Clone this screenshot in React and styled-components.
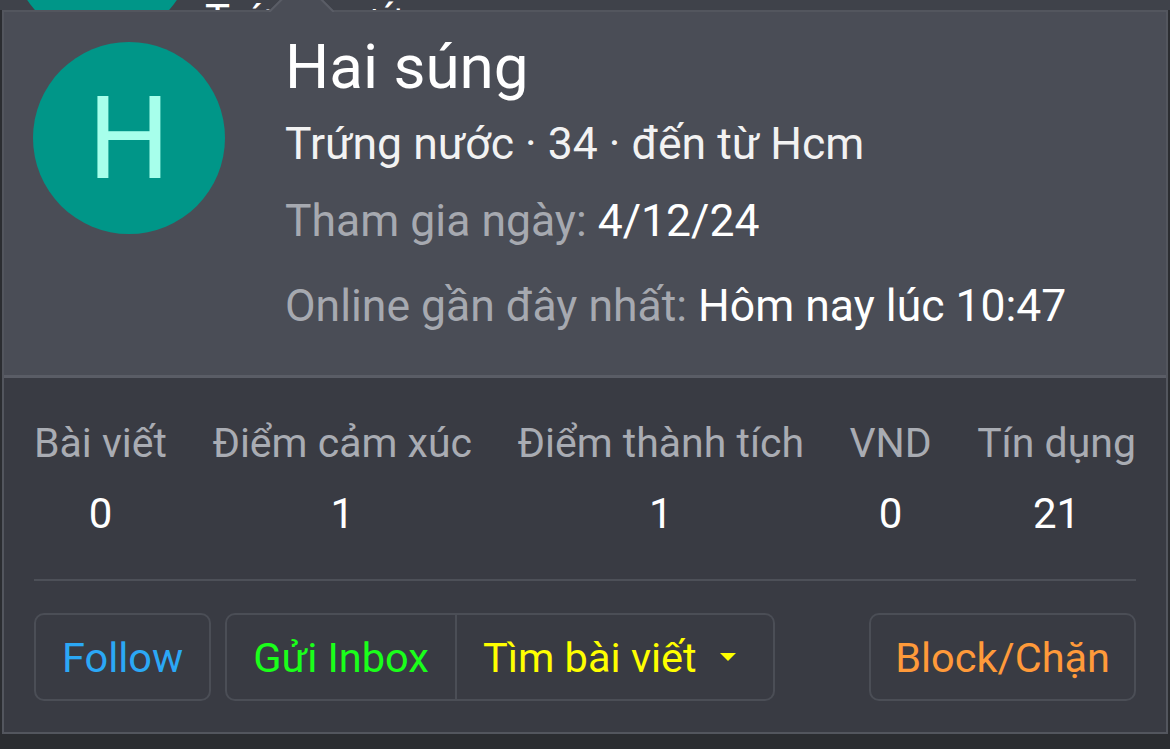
import React from 'react';
import styled, { createGlobalStyle } from 'styled-components';

const GlobalStyle = createGlobalStyle`
  body {
    margin: 0;
    background: #2b2d31;
    font-family: Roboto, "Noto Sans", sans-serif;
  }
`;

const stats = [
  { label: 'Bài viết', value: '0' },
  { label: 'Điểm cảm xúc', value: '1' },
  { label: 'Điểm thành tích', value: '1' },
  { label: 'VND', value: '0' },
  { label: 'Tín dụng', value: '21' },
];

const App = () => {
  return (
    <Page>
      <GlobalStyle />
      <Backdrop>
        <BackAvatar>H</BackAvatar>
        <BackText>Trứng nước</BackText>
      </Backdrop>
      <Tooltip>
        <Arrow />
        <Head>
          <Avatar>H</Avatar>
          <Info>
            <Name>Hai súng</Name>
            <Blurb>Trứng nước · 34 · đến từ Hcm</Blurb>
            <Meta $gap={23}>
              Tham gia ngày: <Strong>4/12/24</Strong>
            </Meta>
            <Meta $gap={31}>
              Online gần đây nhất: <Strong>Hôm nay lúc 10:47</Strong>
            </Meta>
          </Info>
        </Head>
        <Body>
          <Stats>
            {stats.map(s => (
              <Stat key={s.label}>
                <StatLabel>{s.label}</StatLabel>
                <StatValue>{s.value}</StatValue>
              </Stat>
            ))}
          </Stats>
          <Sep />
          <Actions>
            <Button $color="#2ba8f6">Follow</Button>
            <Group>
              <Button $color="#1aff1a" $part="first">Gửi Inbox</Button>
              <Button $color="#ffff00" $part="last">
                Tìm bài viết
                <Caret />
              </Button>
            </Group>
            <Button $color="#ff9a3a" $pad={24} $push>Block/Chặn</Button>
          </Actions>
        </Body>
      </Tooltip>
    </Page>
  );
};

const Page = styled.div`
  width: 1170px;
  height: 749px;
  overflow: hidden;
  display: flex;
  flex-direction: column;
`;

const Backdrop = styled.div`
  height: 10px;
  flex-shrink: 0;
  background: #3f424a;
  overflow: hidden;
  display: flex;
  align-items: flex-start;
`;

const BackAvatar = styled.div`
  flex-shrink: 0;
  width: 180px;
  height: 180px;
  margin: -140px 0 0 12px;
  border-radius: 50%;
  background: #009688;
  color: #a7ffeb;
  font-size: 84px;
  display: flex;
  align-items: center;
  justify-content: center;
`;

const BackText = styled.div`
  margin: -1px 0 0 13px;
  font-size: 42px;
  line-height: 42px;
  color: #ffffff;
  white-space: nowrap;
`;

const Tooltip = styled.div`
  position: relative;
  margin: 0 2px;
  border: 2px solid #53565e;
  display: flex;
  flex-direction: column;
`;

const Arrow = styled.div`
  position: absolute;
  top: -24px;
  left: 274px;
  width: 45px;
  height: 45px;
  background: #4a4d56;
  border-top: 2px solid #5a5d66;
  border-left: 2px solid #5a5d66;
  transform: rotate(45deg);
`;

const Head = styled.div`
  position: relative;
  background: #4a4d56;
  border-bottom: 3px solid #5a5d66;
  padding: 17px 29px 42px;
  display: flex;
  align-items: flex-start;
  gap: 60px;
`;

const Avatar = styled.div`
  flex-shrink: 0;
  width: 192px;
  height: 192px;
  margin-top: 13px;
  border-radius: 50%;
  background: #009688;
  color: #a7ffeb;
  font-size: 115px;
  line-height: 1;
  display: flex;
  align-items: center;
  justify-content: center;
`;

const Info = styled.div`
  display: flex;
  flex-direction: column;
`;

const Name = styled.div`
  font-size: 62px;
  line-height: 76px;
  color: #ffffff;
`;

const Blurb = styled.div`
  margin-top: 12px;
  font-size: 44.5px;
  line-height: 54px;
  color: #f2f2f2;
`;

const Meta = styled.div`
  margin-top: ${p => p.$gap}px;
  font-size: 44.5px;
  line-height: 54px;
  color: #a6a9b0;
  white-space: nowrap;
`;

const Strong = styled.span`
  color: #ffffff;
`;

const Body = styled.div`
  background: #393b43;
  padding: 40px 30px 31px;
  display: flex;
  flex-direction: column;
`;

const Stats = styled.div`
  display: flex;
  justify-content: space-between;
`;

const Stat = styled.div`
  display: flex;
  flex-direction: column;
  align-items: center;
  gap: 21px;
`;

const StatLabel = styled.div`
  font-size: 41px;
  line-height: 50px;
  color: #a9acb3;
  white-space: nowrap;
`;

const StatValue = styled.div`
  font-size: 42px;
  line-height: 50px;
  color: #ffffff;
`;

const Sep = styled.div`
  height: 2px;
  margin-top: 40px;
  background: #4d5058;
`;

const Actions = styled.div`
  margin-top: 32px;
  display: flex;
  align-items: center;
  gap: 14px;
`;

const Group = styled.div`
  display: flex;
`;

const Button = styled.div`
  box-sizing: border-box;
  height: 88px;
  padding: 0 ${p => p.$pad ?? 26}px;
  border: 2px solid #4b4e56;
  border-radius: 10px;
  display: flex;
  align-items: center;
  font-size: 41.5px;
  color: ${p => p.$color};
  white-space: nowrap;
  ${p => (p.$push ? 'margin-left: auto;' : '')}
  ${p =>
    p.$part === 'first'
      ? 'border-top-right-radius: 0; border-bottom-right-radius: 0;'
      : ''}
  ${p =>
    p.$part === 'last'
      ? 'border-left: none; border-top-left-radius: 0; border-bottom-left-radius: 0; padding-right: 37px;'
      : ''}
`;

const Caret = styled.span`
  margin-left: 23px;
  width: 0;
  height: 0;
  border-left: 8.5px solid transparent;
  border-right: 8.5px solid transparent;
  border-top: 8px solid #ffff00;
`;

export default App;
